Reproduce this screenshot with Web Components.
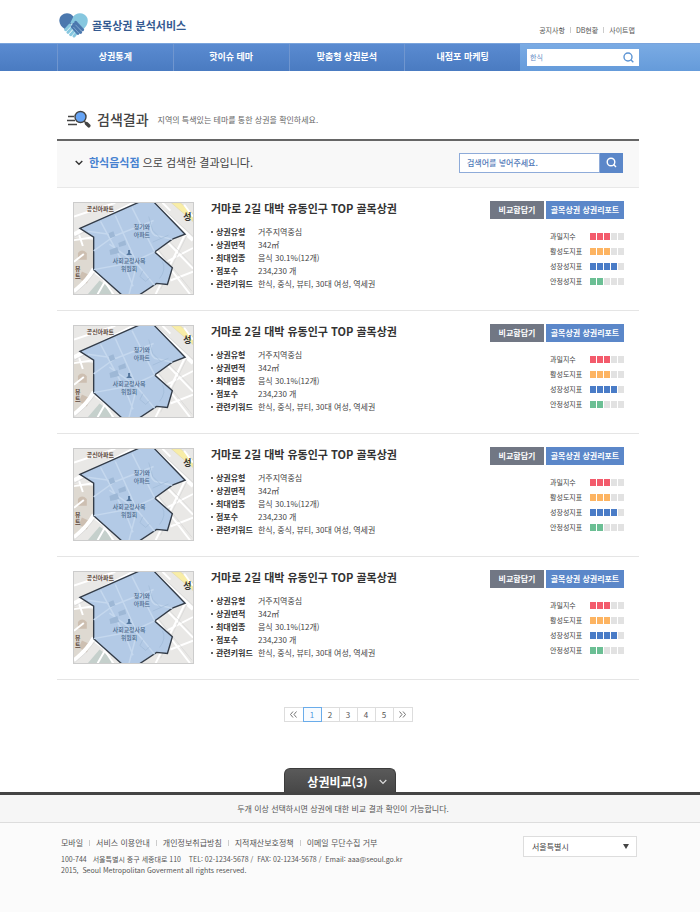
<!DOCTYPE html>
<html lang="ko">
<head>
<meta charset="utf-8">
<meta name="viewport" content="width=device-width, initial-scale=1">
<title>골목상권 분석서비스</title>
<style>
    body {
        margin: 0;
        min-height: 100vh;
        display: flex;
        flex-direction: column;
        background: #fff;
        color: #444;
        font: 8px/13px "Noto Sans CJK KR", "Noto Sans", sans-serif;
        --left: 57px;
        --right: 61px;
        --blue: #5b87c9;
    }
    main {
        display: block;
        padding: 0 var(--right) 0 var(--left);
    }
    site-footer {
        flex: 1;
    }
</style>
</head>
<body>
<site-header></site-header>
<site-nav></site-nav>
<main>
    <page-title heading="검색결과">지역의 특색있는 테마를 통한 상권을 확인하세요.</page-title>
    <search-summary keyword="한식음식점">으로 검색한 결과입니다.</search-summary>
    <result-card>거마로 2길 대박 유동인구 TOP 골목상권</result-card>
    <result-card>거마로 2길 대박 유동인구 TOP 골목상권</result-card>
    <result-card>거마로 2길 대박 유동인구 TOP 골목상권</result-card>
    <result-card>거마로 2길 대박 유동인구 TOP 골목상권</result-card>
    <page-nav current="1" pages="5"></page-nav>
</main>
<compare-dock count="3">두개 이상 선택하시면 상권에 대한 비교 결과 확인이 가능합니다.</compare-dock>
<site-footer></site-footer>

<script>
const reset = `
    :host, * { box-sizing: border-box; }
    a { color: inherit; text-decoration: none; }
    ul, ol, dl, dd, h1, h2, p { margin: 0; padding: 0; list-style: none; }
    button, input, select { font: inherit; margin: 0; border: 0; border-radius: 0; padding: 0; outline: 0; }
    button { cursor: pointer; }
    svg { display: block; }
`;

class SiteHeader extends HTMLElement {
    constructor() {
        super();
        this.attachShadow({ mode: "open" });
        this.shadowRoot.innerHTML = `
            <style>
                ${reset}
                :host {
                    display: flex;
                    justify-content: space-between;
                    height: 43px;
                    padding: 13px 65px 0 59px;
                }
                .logo {
                    display: flex;
                    gap: 4px;
                    height: 25px;
                    align-items: center;
                    color: #355a91;
                    font-size: 11px;
                    font-weight: 700;
                }
                ul {
                    display: flex;
                    padding-top: 11px;
                    font-size: 7px;
                    color: #555;
                }
                li + li::before {
                    content: "";
                    display: inline-block;
                    height: 6px;
                    margin: 0 5px;
                    border-left: 1px solid #ccc;
                }
            </style>
            <a class="logo" href="#">
                <svg width="29" height="25" viewBox="0 0 87 75">
                    <path fill="#4b78ae" d="M1 24C0 5 21-5 36 4l10 9-10 22-19 13C7 42 2 34 1 24z"/>
                    <path fill="#86c7df" d="M43 11C50-3 78-4 85 15c4 14-2 24-11 33L54 27 40 32l-6-3z"/>
                    <g fill="none" stroke-linecap="round">
                        <path stroke="#86c7df" stroke-width="9" d="M33 36L20 50M41 42L27 58M48 50L35 65M54 58l-9 11"/>
                        <path stroke="#fff" stroke-width="1" d="M34 44L22 56M41 51L30 63M48 58l-9 11"/>
                        <path stroke="#4b78ae" stroke-width="9" d="M50 28l21 22M44 34l21 24M40 41l17 20"/>
                        <path stroke="#a9cfe6" stroke-width="1.500" d="M50 36l17 18M44 43l15 17"/>
                    </g>
                </svg>
                <span>골목상권 분석서비스</span>
            </a>
            <ul>
                <li><a href="#">공지사항</a></li>
                <li><a href="#">DB현황</a></li>
                <li><a href="#">사이트맵</a></li>
            </ul>
        `;
    }
}

class SiteNav extends HTMLElement {
    constructor() {
        super();
        this.attachShadow({ mode: "open" });
        const menus = ["상권통계", "핫이슈 테마", "맞춤형 상권분석", "내점포 마케팅"];
        this.shadowRoot.innerHTML = `
            <style>
                ${reset}
                :host {
                    display: flex;
                    height: 28px;
                    padding-left: var(--left);
                    background: linear-gradient(#5a8bd1, #4a7bc1);
                    border-top: 1px solid #7aa4dc;
                }
                ul {
                    display: flex;
                    flex: 1;
                }
                li {
                    flex: 1;
                    border-left: 1px solid #7096cf;
                }
                a {
                    display: block;
                    line-height: 26px;
                    text-align: center;
                    color: #fff;
                    font-size: 9px;
                    font-weight: 700;
                }
                form {
                    display: flex;
                    align-items: center;
                    width: 180px;
                    padding: 0 var(--right) 0 7px;
                    background: linear-gradient(#7aabe4, #659bda);
                }
                .box {
                    display: flex;
                    flex: 1;
                    align-items: center;
                    height: 17px;
                    padding: 0 5px 0 3px;
                    background: #fff;
                }
                input {
                    flex: 1;
                    min-width: 0;
                    background: none;
                    color: #6288c4;
                    font-size: 7px;
                }
                button {
                    background: none;
                }
            </style>
            <ul>${menus.map((m) => `<li><a href="#">${m}</a></li>`).join("")}</ul>
            <form>
                <div class="box">
                    <input type="text" value="한식" aria-label="통합검색">
                    <button type="button" aria-label="검색">
                        <svg width="11" height="11" viewBox="0 0 11 11" fill="none" stroke="#5c94d4" stroke-width="1.4">
                            <circle cx="5" cy="5" r="4"/><path d="M7.8 7.8L10.3 10.3"/>
                        </svg>
                    </button>
                </div>
            </form>
        `;
    }
}

class PageTitle extends HTMLElement {
    constructor() {
        super();
        this.attachShadow({ mode: "open" });
        this.shadowRoot.innerHTML = `
            <style>
                ${reset}
                :host {
                    display: flex;
                    align-items: center;
                    height: 70px;
                    padding: 32px 0 4px 10px;
                    border-bottom: 2px solid #666;
                }
                h1 {
                    margin: 0 9px 0 6px;
                    font-size: 14px;
                    line-height: 20px;
                    font-weight: 500;
                }
                p {
                    color: #666;
                }
            </style>
            <svg width="24" height="18" viewBox="0 0 24 18">
                <path stroke="#444" stroke-width="1.3" d="M1 6.500h6M0 10.500h8M1 14.500h9"/>
                <path stroke="#444" stroke-width="3.500" stroke-linecap="round" d="M19.500 13.500l2.300 2.300"/>
                <path stroke="#444" stroke-width="1.500" d="M17 11l2 2"/>
                <circle cx="13.500" cy="7" r="5.500" fill="#66a4f5" stroke="#444" stroke-width="1.400"/>
            </svg>
            <h1>${this.getAttribute("heading")}</h1>
            <p><slot></slot></p>
        `;
    }
}

class SearchSummary extends HTMLElement {
    constructor() {
        super();
        this.attachShadow({ mode: "open" });
        this.shadowRoot.innerHTML = `
            <style>
                ${reset}
                :host {
                    display: flex;
                    align-items: center;
                    justify-content: space-between;
                    height: 47px;
                    padding: 0 16px 3px 18px;
                    background: #f8f8f8;
                    border-bottom: 1px solid #e8e8e8;
                    font-size: 11px;
                }
                p {
                    display: flex;
                    align-items: center;
                    gap: 3px;
                }
                strong {
                    margin-left: 3px;
                    color: #4681d0;
                    font-weight: 700;
                }
                form {
                    display: flex;
                    width: 164px;
                    height: 20px;
                    font-size: 8px;
                }
                input {
                    flex: 1;
                    min-width: 0;
                    padding: 0 7px;
                    border: 1px solid #8eabd9;
                    background: #fff;
                }
                input::placeholder {
                    color: #5079b8;
                    font-weight: 500;
                }
                button {
                    display: grid;
                    place-items: center;
                    width: 23px;
                    background: var(--blue);
                }
            </style>
            <p>
                <svg width="8" height="6" viewBox="0 0 8 6" fill="none" stroke="#333" stroke-width="1.4"><path d="M.7 1L4 4.300 7.300 1"/></svg>
                <strong>${this.getAttribute("keyword")}</strong>
                <span><slot></slot></span>
            </p>
            <form>
                <input type="text" placeholder="검색어를 넣어주세요." aria-label="검색어">
                <button type="button" aria-label="검색">
                    <svg width="11" height="11" viewBox="0 0 11 11" fill="none" stroke="#fff" stroke-width="1.4">
                        <circle cx="5" cy="5" r="3.800"/><path d="M7.600 7.600L10 10"/>
                    </svg>
                </button>
            </form>
        `;
    }
}

class AreaMap extends HTMLElement {
    constructor() {
        super();
        this.attachShadow({ mode: "open" });
        this.shadowRoot.innerHTML = `
            <style>
                ${reset}
                :host {
                    display: block;
                    border: 1px solid #ccc;
                }
                svg {
                    width: 100%;
                    height: 100%;
                }
            </style>
            <svg viewBox="0 0 121 93" preserveAspectRatio="xMidYMid slice" role="img" aria-label="상권 지도">
                <rect width="121" height="93" fill="#e9e8e6"/>
                <path fill="#ded9d1" d="M0 36l20 2v30L0 88z"/>
                <path fill="#cdbfb1" d="M4 51q4-5 9 0v7H4zM8 70l9 4-4 8-8-5z"/>
                <path fill="#c5d0cc" d="M14 93l12-14 12 9v5z"/>
                <path fill="#f8eda7" stroke="#ddd4a0" stroke-width=".5" d="M99 0h9l13 11v8z"/>
                <g fill="none" stroke="#fff">
                    <path stroke-width="4" d="M0 32L62 0M81 0l40 38M0 90q14-11 20-23"/>
                    <path stroke-width="2" d="M0 38l20-3M0 14L42 0M113 32L83 93M84 49l34 44M94 39l27 28M121 46L92 61M121 70L98 79M5 32l4 12M0 60l10-8M20 70l12 9-8 14M30 78l10 15M98 8l-8-8M112 2l9 12"/>
                </g>
                <g fill="none" stroke="#d3d3d3" stroke-width=".6">
                    <path d="M0 35L66 2M84 0l37 34M0 93q14-11 22-23M97 39l24 25M86 48l34 42M115 33L88 88"/>
                </g>
                <path fill="#b3cae6" stroke="#333c48" stroke-width="1.400" d="M6 26L67-1H81L113 32 100 37 82 50 100 66 95 83 84 82 66 94H49L20 68V35z"/>
                <g fill="none" stroke="#c5d8ee" stroke-width="1.500">
                    <path d="M14 29l29 4 38-15M27 19l26 48 7 18M42 13l22 49-8 31M59 5l23 45M20 49l22-16M20 68l38-7 24-11M64 62l18 22M36 42l28 20M79 20q-3 8 3 13l18 4"/>
                </g>
                <path fill="none" stroke="#a0bad8" stroke-width=".7" d="M76 14l4 14 8 8M80 40l16-7M70 69l-3 6 6 5 4-4M90 60q4 8-3 17"/>
                <path fill="#9eb8d6" d="M35 31l5-2 2 5-5 2zM36 48l8-3 2 6-9 2zM45 41l7-3 1 5-7 2z"/>
                <path fill="#55779e" d="M55 48h2v3l2 2h-6l2-2z"/>
                <g font-size="6" font-weight="500" text-anchor="middle" fill="#486789">
                    <text x="69" y="27">청기와</text>
                    <text x="69" y="35">아파트</text>
                    <text x="56" y="61">사회교정사목</text>
                    <text x="56" y="69">위원회</text>
                </g>
                <g font-size="6" font-weight="700" fill="#5b4639">
                    <text x="13" y="8">공신아파트</text>
                    <text x="1" y="69">뷰</text>
                    <text x="1" y="77">트</text>
                    <text x="111" y="18" font-size="9" fill="#333">성</text>
                </g>
            </svg>
        `;
    }
}

// Five step gauge, e.g. <index-meter value="3" color="#f25b6b">과밀지수</index-meter>
class IndexMeter extends HTMLElement {
    constructor() {
        super();
        this.attachShadow({ mode: "open" });
        const value = Number(this.getAttribute("value"));
        const steps = [1, 2, 3, 4, 5].map((n) => `<i class="${n <= value ? "on" : ""}"></i>`).join("");
        this.shadowRoot.innerHTML = `
            <style>
                :host {
                    display: flex;
                    align-items: center;
                    justify-content: space-between;
                    width: 74px;
                    height: 15px;
                    font-size: 7px;
                }
                .steps {
                    display: flex;
                    gap: 1px;
                }
                i {
                    width: 6px;
                    height: 7px;
                    background: #e2e2e2;
                }
                .on {
                    background: ${this.getAttribute("color")};
                }
            </style>
            <span><slot></slot></span>
            <span class="steps">${steps}</span>
        `;
    }
}

class ResultCard extends HTMLElement {
    constructor() {
        super();
        this.attachShadow({ mode: "open" });
        const facts = [
            ["상권유형", "거주지역중심"],
            ["상권면적", "342㎡"],
            ["최대업종", "음식 30.1%(12개)"],
            ["점포수", "234,230 개"],
            ["관련키워드", "한식, 중식, 뷰티, 30대 여성, 역세권"],
        ];
        this.shadowRoot.innerHTML = `
            <style>
                ${reset}
                :host {
                    display: grid;
                    grid-template-columns: 121px 1fr auto;
                    gap: 17px;
                    height: 123px;
                    padding: 13px 15px 0 16px;
                    border-bottom: 1px solid #e5e5e5;
                }
                area-map {
                    height: 93px;
                    margin-top: 1px;
                }
                h2 {
                    margin-bottom: 9px;
                    color: #333;
                    font-size: 11px;
                    line-height: 15px;
                    font-weight: 700;
                    white-space: nowrap;
                }
                dl div {
                    display: grid;
                    grid-template-columns: 5px 42px 1fr;
                    align-items: center;
                    height: 13px;
                    white-space: nowrap;
                }
                dl div::before {
                    content: "";
                    width: 2px;
                    height: 2px;
                    background: #666;
                }
                dt {
                    font-weight: 700;
                    color: #333;
                }
                .actions {
                    display: flex;
                    gap: 2px;
                    margin-bottom: 10px;
                }
                button {
                    height: 18px;
                    padding: 0 0 2px;
                    width: 78px;
                    background: var(--blue);
                    color: #fff;
                    font-weight: 700;
                }
                .compare {
                    width: 54px;
                    background: #717784;
                }
                .meters {
                    display: grid;
                    justify-content: end;
                }
            </style>
            <area-map></area-map>
            <div>
                <h2><slot></slot></h2>
                <dl>${facts.map(([k, v]) => `<div><dt>${k}</dt><dd>${v}</dd></div>`).join("")}</dl>
            </div>
            <div>
                <div class="actions">
                    <button type="button" class="compare">비교함담기</button>
                    <button type="button">골목상권 상권리포트</button>
                </div>
                <div class="meters">
                    <index-meter value="3" color="#f35b6c">과밀지수</index-meter>
                    <index-meter value="3" color="#fdb462">활성도지표</index-meter>
                    <index-meter value="4" color="#4a7cc7">성장성지표</index-meter>
                    <index-meter value="2" color="#6bbf94">안정성지표</index-meter>
                </div>
            </div>
        `;
    }
}

class PageNav extends HTMLElement {
    constructor() {
        super();
        this.attachShadow({ mode: "open" });
        const current = Number(this.getAttribute("current"));
        const count = Number(this.getAttribute("pages"));
        let links = "";
        for (let n = 1; n <= count; n++) {
            links += `<li><a href="#" ${n === current ? 'class="on" aria-current="page"' : ""}>${n}</a></li>`;
        }
        const arrow = (d) => `<svg width="7" height="7" viewBox="0 0 7 7" fill="none" stroke="#666" stroke-width=".9"><path d="${d}"/></svg>`;
        this.shadowRoot.innerHTML = `
            <style>
                ${reset}
                :host {
                    display: block;
                    padding: 27px 0 46px;
                }
                ol {
                    display: flex;
                    justify-content: center;
                }
                li + li {
                    margin-left: -1px;
                }
                a {
                    display: grid;
                    place-items: center;
                    width: 19px;
                    height: 15px;
                    border: 1px solid #ddd;
                    color: #555;
                }
                li:first-child a, li:last-child a {
                    width: 20px;
                }
                .on {
                    position: relative;
                    border-color: #6aacea;
                    background: #f7fbff;
                    color: #4d94dd;
                }
            </style>
            <ol>
                <li><a href="#" aria-label="이전">${arrow("M3 .500L.500 3.500 3 6.500M6.500 .500L4 3.500 6.500 6.500")}</a></li>
                ${links}
                <li><a href="#" aria-label="다음">${arrow("M.500 .500L3 3.500 .500 6.500M4 .500L6.500 3.500 4 6.500")}</a></li>
            </ol>
        `;
    }
}

class CompareDock extends HTMLElement {
    constructor() {
        super();
        this.attachShadow({ mode: "open" });
        this.shadowRoot.innerHTML = `
            <style>
                ${reset}
                :host {
                    display: block;
                    text-align: center;
                }
                .bar {
                    padding-right: 20px;
                }
                .tab {
                    display: flex;
                    align-items: center;
                    justify-content: center;
                    gap: 11px;
                    width: 112px;
                    height: 24px;
                    margin: 0 auto;
                    padding: 2px 0 0 14px;
                    border: 1px solid #3c3c3c;
                    border-bottom: 0;
                    border-radius: 6px 6px 0 0;
                    background: linear-gradient(#5a5a5a, #474747);
                    color: #fff;
                    font-size: 12px;
                    font-weight: 700;
                }
                p {
                    padding: 7px 14px 7px 0;
                    border-top: 3px solid #444;
                    border-bottom: 1px solid #ddd;
                    background: #f6f6f6;
                    color: #555;
                }
            </style>
            <div class="bar">
                <button type="button" class="tab">
                    상권비교(${this.getAttribute("count")})
                    <svg width="8" height="6" viewBox="0 0 8 6" fill="none" stroke="#ddd" stroke-width="1.200"><path d="M.7 1L4 4.300 7.300 1"/></svg>
                </button>
            </div>
            <p><slot></slot></p>
        `;
    }
}

class SiteFooter extends HTMLElement {
    constructor() {
        super();
        this.attachShadow({ mode: "open" });
        this.shadowRoot.innerHTML = `
            <style>
                ${reset}
                :host {
                    display: flex;
                    justify-content: space-between;
                    align-items: flex-start;
                    padding: 13px 63px 0 61px;
                    background: #fbfbfb;
                    color: #555;
                }
                ul {
                    display: flex;
                    margin-bottom: 5px;
                }
                li + li::before {
                    content: "";
                    display: inline-block;
                    height: 6px;
                    margin: 0 6px;
                    border-left: 1px solid #ccc;
                }
                address {
                    font-style: normal;
                    font-size: 7px;
                    line-height: 11px;
                    white-space: pre;
                }
                .select {
                    position: relative;
                    width: 114px;
                }
                select {
                    appearance: none;
                    display: block;
                    width: 100%;
                    height: 21px;
                    padding: 0 8px;
                    border: 1px solid #ddd;
                    background: #fff;
                    color: #444;
                }
                svg {
                    position: absolute;
                    top: 8px;
                    right: 8px;
                    pointer-events: none;
                }
            </style>
            <div>
                <ul>
                    <li><a href="#">모바일</a></li>
                    <li><a href="#">서비스 이용안내</a></li>
                    <li><a href="#">개인정보취급방침</a></li>
                    <li><a href="#">지적재산보호정책</a></li>
                    <li><a href="#">이메일 무단수집 거부</a></li>
                </ul>
                <address>100-744   서울특별시 중구 세종대로 110    TEL: 02-1234-5678 /  FAX: 02-1234-5678 /  Email: aaa@seoul.go.kr
2015,  Seoul Metropolitan Goverment all rights reserved.</address>
            </div>
            <div class="select">
                <select aria-label="지역 선택">
                    <option>서울특별시</option>
                </select>
                <svg width="6" height="5" viewBox="0 0 6 5"><path fill="#444" d="M0 0h6L3 5z"/></svg>
            </div>
        `;
    }
}

customElements.define("site-header", SiteHeader);
customElements.define("site-nav", SiteNav);
customElements.define("page-title", PageTitle);
customElements.define("search-summary", SearchSummary);
customElements.define("area-map", AreaMap);
customElements.define("index-meter", IndexMeter);
customElements.define("result-card", ResultCard);
customElements.define("page-nav", PageNav);
customElements.define("compare-dock", CompareDock);
customElements.define("site-footer", SiteFooter);
</script>
</body>
</html>
